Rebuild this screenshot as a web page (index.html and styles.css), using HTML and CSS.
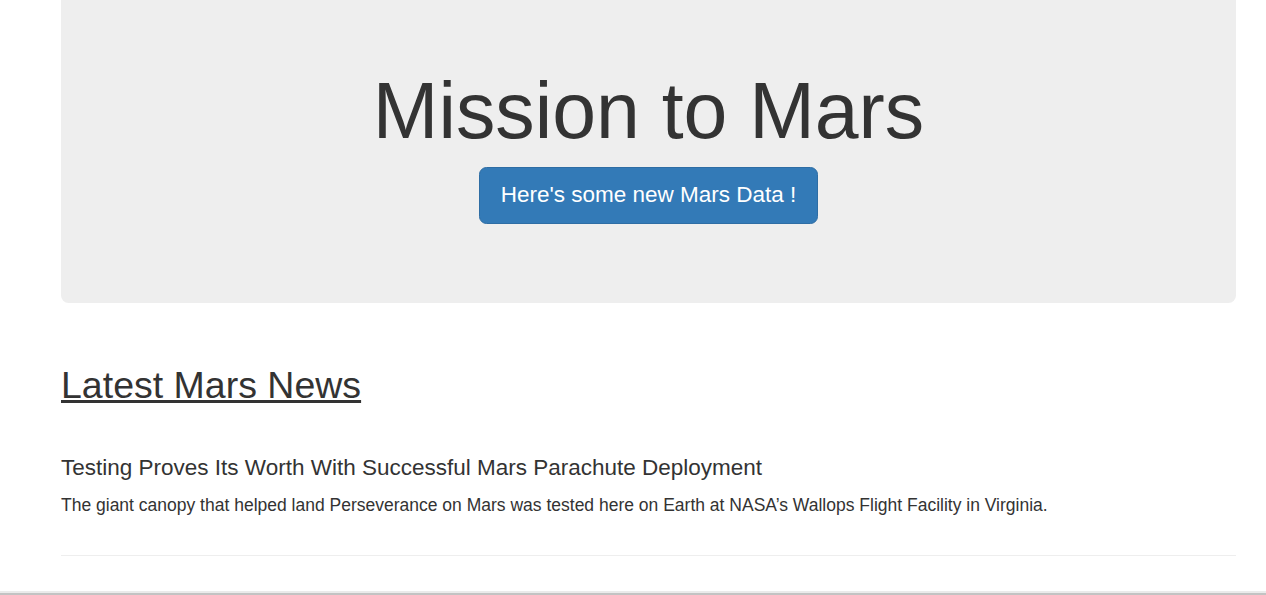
FILE: index.html
```html
<!DOCTYPE html>
<html lang="en">
<head>
<meta charset="utf-8">
<title>Mission to Mars</title>
<link rel="stylesheet" href="styles.css">
</head>
<body>
<div class="container">
  <div class="jumbotron">
    <h1 class="title">Mission to Mars</h1>
    <p class="cta"><a class="btn" href="#">Here's some new Mars Data !</a></p>
  </div>
  <section class="news">
    <h2 class="news-heading"><a href="#">Latest Mars News</a></h2>
    <h4 class="news-title">Testing Proves Its Worth With Successful Mars Parachute Deployment</h4>
    <p class="news-body">The giant canopy that helped land Perseverance on Mars was tested here on Earth at NASA’s Wallops Flight Facility in Virginia.</p>
    <hr class="rule">
  </section>
</div>
<div class="window-edge"></div>
</body>
</html>
```

FILE: styles.css
```css
* { box-sizing: border-box; }
html, body {
  margin: 0;
  padding: 0;
  background: #fff;
  color: #333;
  font-family: "Liberation Sans", Arial, Helvetica, sans-serif;
  font-size: 17.5px;
  line-height: 1.42857;
}
.container {
  width: 1175px;
  margin-left: 61px;
}
.jumbotron {
  background: #eeeeee;
  border-radius: 0 0 7.5px 7.5px;
  padding: 43px 75px 60px;
  margin-bottom: 37.5px;
  display: flex;
  flex-direction: column;
  align-items: center;
}
.title {
  margin: 25px 0 12.5px;
  font-size: 78.75px;
  font-weight: 500;
  line-height: 1.1;
  color: #333;
}
.cta {
  margin: 0 0 18.75px;
}
.btn {
  display: inline-block;
  background: #337ab7;
  border: 1.25px solid #2e6da4;
  border-radius: 7.5px;
  color: #fff;
  font-size: 22.5px;
  line-height: 1.3333;
  padding: 11.5px 20.5px 13.5px;
  text-decoration: none;
}
.news {
  display: flex;
  flex-direction: column;
}
.news-heading {
  margin: 25px 0 12.5px;
  font-size: 37.5px;
  font-weight: 500;
  line-height: 1.1;
}
.news-heading a {
  color: #333;
  text-decoration: underline;
}
.news-title {
  margin: 37px 0 12.5px;
  font-size: 22.5px;
  font-weight: 500;
  line-height: 1.1;
}
.news-body {
  margin: 0 0 12.5px;
}
.rule {
  width: 100%;
  margin: 24px 0 25px;
  border: 0;
  border-top: 1px solid #eee;
}
.window-edge {
  position: fixed;
  left: 0;
  right: 0;
  bottom: 0;
  height: 4px;
  border-top: 2px solid #ebebeb;
  background: #c3c3c3;
}
```
